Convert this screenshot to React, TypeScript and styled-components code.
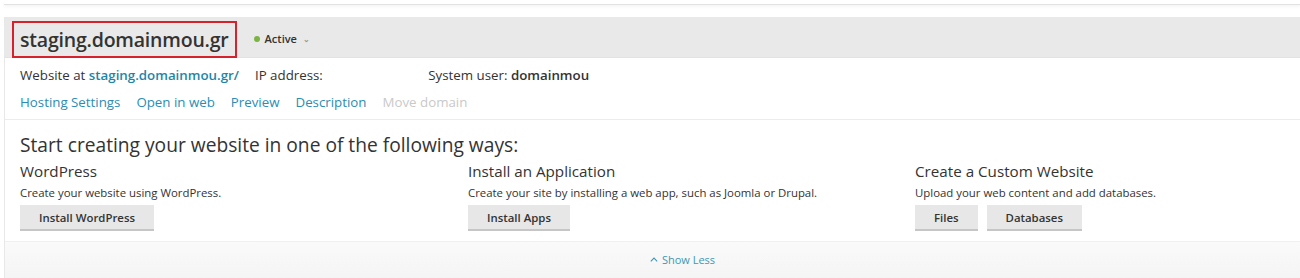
import React from "react";
import styled, { createGlobalStyle } from "styled-components";

const Global = createGlobalStyle`
  html, body { margin: 0; padding: 0; background: #ffffff; }
  body { font-family: "Open Sans", "Noto Sans", sans-serif; color: #333333; }
  * { box-sizing: border-box; }
`;

const Page = styled.div`
  width: 1300px;
  height: 278px;
  overflow: hidden;
  background: #ffffff;
`;

const TopStrip = styled.div`
  height: 5px;
  margin-left: 4px;
  border-bottom: 1px solid #e2e2e2;
  box-shadow: 0 2px 3px rgba(0, 0, 0, 0.04);
`;

const Panel = styled.div`
  margin: 12px 0 0 4px;
  border-left: 1px solid #e8e8e8;
`;

const Header = styled.div`
  height: 41px;
  background: #e9e9e9;
  display: flex;
  align-items: flex-end;
  padding-left: 7px;
  border-bottom: 1px solid #e2e2e2;
`;

const TitleBox = styled.div`
  height: 37px;
  border: 2px solid #d6222c;
  padding: 0 6px;
  display: flex;
  align-items: center;
  margin-bottom: -1px;
`;

const Title = styled.h1`
  margin: 0;
  font-size: 19.5px;
  font-weight: 600;
  color: #333333;
  letter-spacing: -0.2px;
`;

const Status = styled.div`
  display: flex;
  align-items: center;
  gap: 5px;
  margin-left: 17px;
  height: 37px;
  font-size: 11px;
  font-weight: 600;
  color: #333333;
`;

const Dot = styled.span`
  width: 6px;
  height: 6px;
  border-radius: 50%;
  background: #7cb342;
`;

const Caret = styled.span`
  font-size: 8px;
  color: #999999;
  margin-left: 1px;
`;

const Info = styled.div`
  padding: 6px 15px 7px;
  display: flex;
  flex-direction: column;
  gap: 6px;
  border-bottom: 1px solid #ececec;
`;

const InfoRow = styled.div`
  display: flex;
  align-items: center;
  gap: 16px;
  height: 21px;
  font-size: 13.3px;
  color: #333333;
`;

const Item = styled.span`
  white-space: nowrap;
`;

const Strong = styled.b`
  font-weight: 600;
`;

const DomainLink = styled.a`
  color: #1d85a8;
  font-weight: 600;
  text-decoration: none;
`;

const IpBlank = styled.span`
  display: inline-block;
  width: 86px;
`;

const Link = styled.a<{ $disabled?: boolean }>`
  color: ${(p) => (p.$disabled ? "#c9c9c9" : "#2a8db4")};
  text-decoration: none;
  white-space: nowrap;
`;

const Create = styled.div`
  padding: 12px 15px 10px;
`;

const Lead = styled.h2`
  margin: 0;
  font-size: 19.2px;
  font-weight: 400;
  line-height: 26px;
  color: #333333;
`;

const Columns = styled.div`
  display: grid;
  grid-template-columns: 448px 447px 1fr;
  margin-top: 2px;
`;

const Column = styled.div`
  display: flex;
  flex-direction: column;
  align-items: flex-start;
`;

const ColTitle = styled.h3`
  margin: 0;
  font-size: 15.2px;
  font-weight: 400;
  line-height: 22px;
  color: #333333;
`;

const ColText = styled.p`
  margin: 0;
  font-size: 11.4px;
  line-height: 21px;
  color: #333333;
`;

const Buttons = styled.div`
  display: flex;
  gap: 9px;
  margin-top: 2px;
`;

const Button = styled.button`
  height: 26px;
  padding: 0 19px;
  border: none;
  border-bottom: 2px solid #c6c6c6;
  background: #e7e7e7;
  font-family: "Open Sans", "Noto Sans", sans-serif;
  font-size: 11.4px;
  font-weight: 600;
  color: #333333;
  cursor: pointer;
`;

const Footer = styled.div`
  height: 40px;
  background: linear-gradient(#fafafa, #f4f4f4);
  border-top: 1px solid #f0f0f0;
  display: flex;
  justify-content: center;
  align-items: flex-start;
  padding: 10px 0 0 60px;
`;

const ShowLess = styled.a`
  color: #3d97b6;
  font-size: 11px;
  text-decoration: none;
  display: flex;
  align-items: center;
  gap: 4px;
`;

export default function App() {
  return (
    <Page>
      <Global />
      <TopStrip />
      <Panel>
        <Header>
          <TitleBox>
            <Title>staging.domainmou.gr</Title>
          </TitleBox>
          <Status>
            <Dot />
            Active
            <Caret>⌄</Caret>
          </Status>
        </Header>
        <Info>
          <InfoRow>
            <Item>
              Website at <DomainLink href="#">staging.domainmou.gr/</DomainLink>
            </Item>
            <Item>
              IP address: <IpBlank />
            </Item>
            <Item>
              System user: <Strong>domainmou</Strong>
            </Item>
          </InfoRow>
          <InfoRow>
            <Link href="#">Hosting Settings</Link>
            <Link href="#">Open in web</Link>
            <Link href="#">Preview</Link>
            <Link href="#">Description</Link>
            <Link $disabled>Move domain</Link>
          </InfoRow>
        </Info>
        <Create>
          <Lead>Start creating your website in one of the following ways:</Lead>
          <Columns>
            <Column>
              <ColTitle>WordPress</ColTitle>
              <ColText>Create your website using WordPress.</ColText>
              <Buttons>
                <Button>Install WordPress</Button>
              </Buttons>
            </Column>
            <Column>
              <ColTitle>Install an Application</ColTitle>
              <ColText>Create your site by installing a web app, such as Joomla or Drupal.</ColText>
              <Buttons>
                <Button>Install Apps</Button>
              </Buttons>
            </Column>
            <Column>
              <ColTitle>Create a Custom Website</ColTitle>
              <ColText>Upload your web content and add databases.</ColText>
              <Buttons>
                <Button>Files</Button>
                <Button>Databases</Button>
              </Buttons>
            </Column>
          </Columns>
        </Create>
        <Footer>
          <ShowLess href="#">
            <svg width="8" height="5" viewBox="0 0 8 5" fill="none">
              <path d="M0.8 4.3 L4 1.1 L7.2 4.3" stroke="#3d97b6" strokeWidth="1.1" />
            </svg>
            Show Less
          </ShowLess>
        </Footer>
      </Panel>
    </Page>
  );
}
